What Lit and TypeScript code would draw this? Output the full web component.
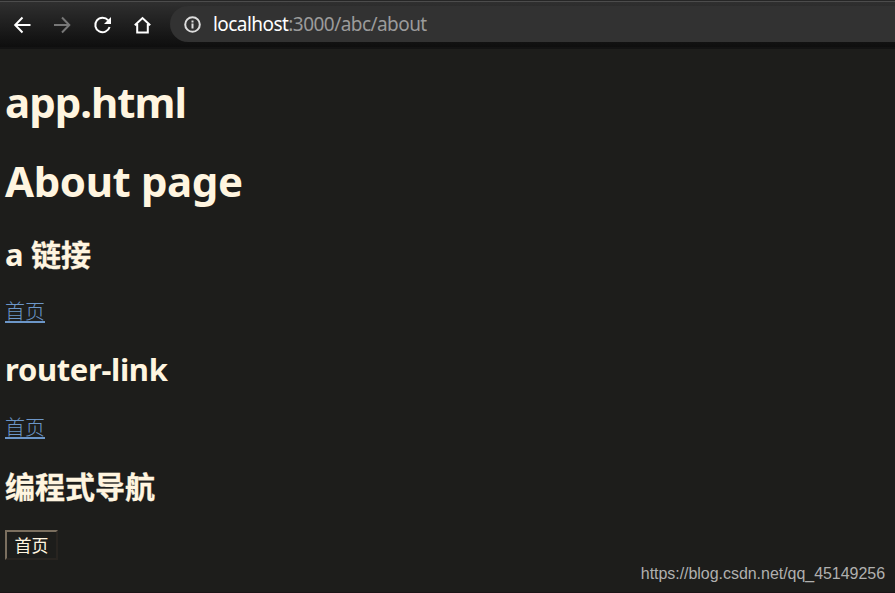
import { LitElement, html, css } from "lit";
import { customElement } from "lit/decorators.js";

@customElement("app-root")
export class AppRoot extends LitElement {
  static styles = css`
    :host { display: block; position: relative; height: 593px; box-sizing: border-box; overflow: hidden; background: #1d1d1b; border-bottom: 1px solid #1a1416; color: #fff5e0; font-family: "Noto Sans", "Noto Sans CJK SC", sans-serif; }
    * { box-sizing: border-box; }
    .bar { display: flex; height: 49px; padding-top: 5px; border-top: 1px solid #262626; box-shadow: inset 0 1px #4c4c4c, inset 0 -2px #131313; background: linear-gradient(#303030, #0e0e0e 46px); }
    .nav { display: flex; width: 170px; padding: 9px 0 0 12px; gap: 20px; }
    svg { display: block; width: 20px; height: 20px; fill: none; stroke: #fff; stroke-width: 2; flex: none; }
    .off { stroke: #777; }
    .solid { fill: #fff; stroke: none; }
    .address { flex: 1; display: flex; height: 36px; padding: 9px 0 0 13px; background: #323232; border-radius: 18px 0 0 18px; }
    .info { stroke: #ddd; }
    .url { margin-left: 10px; line-height: 18px; font-size: 19px; letter-spacing: -0.55px; color: #9b9b9b; white-space: nowrap; }
    .host { color: #fff; }
    main { padding: 25px 0 0 5px; }
    h1, h2, p { margin: 0; white-space: nowrap; }
    h1 { font-size: 42px; line-height: 56px; height: 79px; letter-spacing: -0.4px; }
    .title { letter-spacing: -1px; }
    h2 { font-size: 31px; line-height: 42px; height: 64px; letter-spacing: -0.35px; }
    .cjk { font-family: "Noto Sans CJK SC", sans-serif; font-size: 30px; letter-spacing: 0; -webkit-text-stroke: 0.3px; }
    p { height: 52px; line-height: 30px; font-size: 20px; font-family: "Noto Sans CJK SC", sans-serif; }
    a { color: #6c96c8; text-decoration: underline; text-decoration-thickness: 2px; text-underline-offset: 2px; font-weight: 300; }
    button { display: block; width: 53px; height: 30px; margin-top: 2px; padding: 0; border: 2px solid; border-color: #7b6f5f #282420 #282420 #7b6f5f; background: #1d1d1b; color: #fff5e0; font: 400 17px/26px "Noto Sans CJK SC", sans-serif; }
    .mark { position: absolute; right: 10px; bottom: 8px; font: 16px/20px "Liberation Sans", sans-serif; letter-spacing: -0.04px; color: #b0b0af; }
  `;

  render() {
    return html`
      <div class="bar">
        <div class="nav">
          <svg viewBox="0 0 20 20"><path d="M18.5 10H3.5M10.5 2.5L3.2 10l7.3 7.5"/></svg>
          <svg class="off" viewBox="0 0 20 20"><path d="M2 10h15M10 2.5l7.3 7.5-7.3 7.5"/></svg>
          <svg viewBox="0 0 20 20"><path d="M16.2 5.3A7.3 7.3 0 1 0 17.6 12"/><path class="solid" d="M19 2v7h-7z"/></svg>
          <svg viewBox="0 0 20 20"><path d="M2.8 10.2L10.5 3l7.7 7.2M5.2 9v8.4h10.6V9"/></svg>
        </div>
        <div class="address">
          <svg class="info" viewBox="0 0 20 20"><circle cx="9.5" cy="9.5" r="7.3"/><path d="M9.5 8.5v5M9.5 5.5v2"/></svg>
          <span class="url"><span class="host">localhost</span>:3000/abc/about</span>
        </div>
      </div>
      <main>
        <h1 class="title">app.html</h1>
        <h1>About page</h1>
        <h2>a <span class="cjk">链接</span></h2>
        <p><a>首页</a></p>
        <h2>router-link</h2>
        <p><a>首页</a></p>
        <h2><span class="cjk">编程式导航</span></h2>
        <button>首页</button>
      </main>
      <div class="mark">https://blog.csdn.net/qq_45149256</div>
    `;
  }
}
